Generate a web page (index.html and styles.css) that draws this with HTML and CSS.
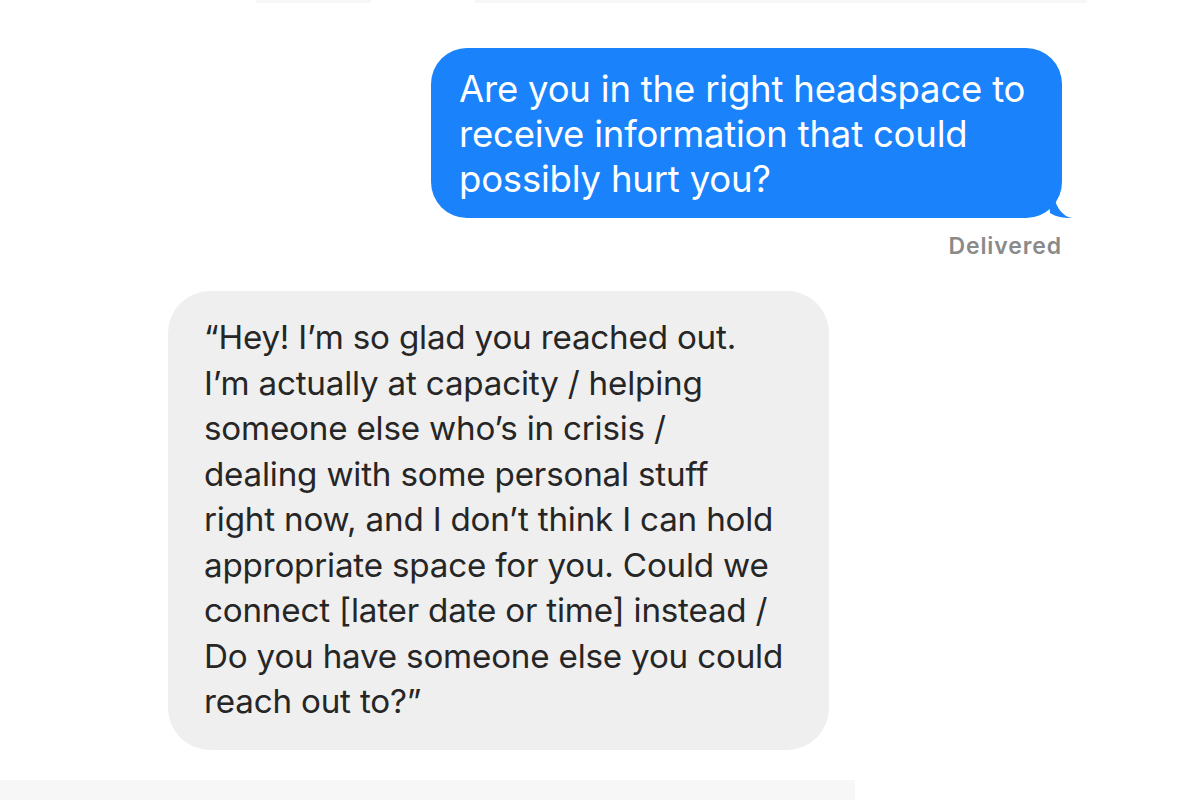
FILE: index.html
```html
<!DOCTYPE html>
<html lang="en">
<head>
    <meta charset="UTF-8">
    <meta name="viewport" content="width=device-width, initial-scale=1.0">
    <title>Messages</title>
    <link rel="stylesheet" href="styles.css">
</head>
<body>
    <div class="top-edge">
        <span class="edge-a"></span>
        <span class="edge-b"></span>
    </div>

    <div class="thread">
        <div class="row sent-row">
            <div class="bubble sent">
                Are you in the right headspace to<br>
                receive information that could<br>
                possibly hurt you?
                <svg class="tail" width="24" height="26" viewBox="0 0 24 26">
                    <path d="M0 0 L6 0 C6 10 10 18 18 24 C20 25 22 25.5 24 26 C15 26 8 25 2 21 Z" fill="#1a82fb"/>
                </svg>
            </div>
            <div class="status">Delivered</div>
        </div>

        <div class="row received-row">
            <div class="bubble received">
                “Hey! I’m so glad you reached out.<br>
                I’m actually at capacity / helping<br>
                someone else who’s in crisis /<br>
                dealing with some personal stuff<br>
                right now, and I don’t think I can hold<br>
                appropriate space for you. Could we<br>
                connect [later date or time] instead /<br>
                Do you have someone else you could<br>
                reach out to?”
            </div>
        </div>
    </div>

    <div class="bottom-edge"></div>
</body>
</html>
```

FILE: styles.css
```css
body {
    margin: 0;
    background: #fff;
    font-family: Inter, "Noto Sans", sans-serif;
    height: 800px;
    overflow: hidden;
    display: flex;
    flex-direction: column;
}
.top-edge {
    height: 3px;
    display: flex;
    padding-left: 256px;
    gap: 104px;
}
.edge-a {
    width: 115px;
    background: #f7f7f7;
}
.edge-b {
    width: 612px;
    background: #f7f7f7;
}
.thread {
    flex: 1;
    display: flex;
    flex-direction: column;
}
.row {
    display: flex;
    flex-direction: column;
}
.sent-row {
    align-items: flex-end;
    padding-right: 138px;
    margin-top: 45px;
}
.received-row {
    align-items: flex-start;
    padding-left: 168px;
    margin-top: 31px;
}
.bubble {
    position: relative;
    white-space: nowrap;
}
.sent {
    background: #1a82fb;
    color: #fff;
    width: 575px;
    padding: 19px 28px 16px 28px;
    border-radius: 36px;
    font-size: 36.5px;
    line-height: 45px;
    letter-spacing: -0.2px;
}
.tail {
    position: absolute;
    right: -10px;
    bottom: 0;
}
.status {
    margin-top: 14px;
    font-size: 23px;
    font-weight: 600;
    color: #8a8a8a;
    letter-spacing: 0.9px;
}
.received {
    background: #efefef;
    color: #262626;
    width: 589px;
    padding: 24px 36px 25px 36px;
    border-radius: 42px;
    font-size: 33.2px;
    line-height: 45.5px;
    letter-spacing: -0.2px;
}
.bottom-edge {
    margin-top: auto;
    height: 20px;
    width: 855px;
    background: #f7f7f7;
}
```
